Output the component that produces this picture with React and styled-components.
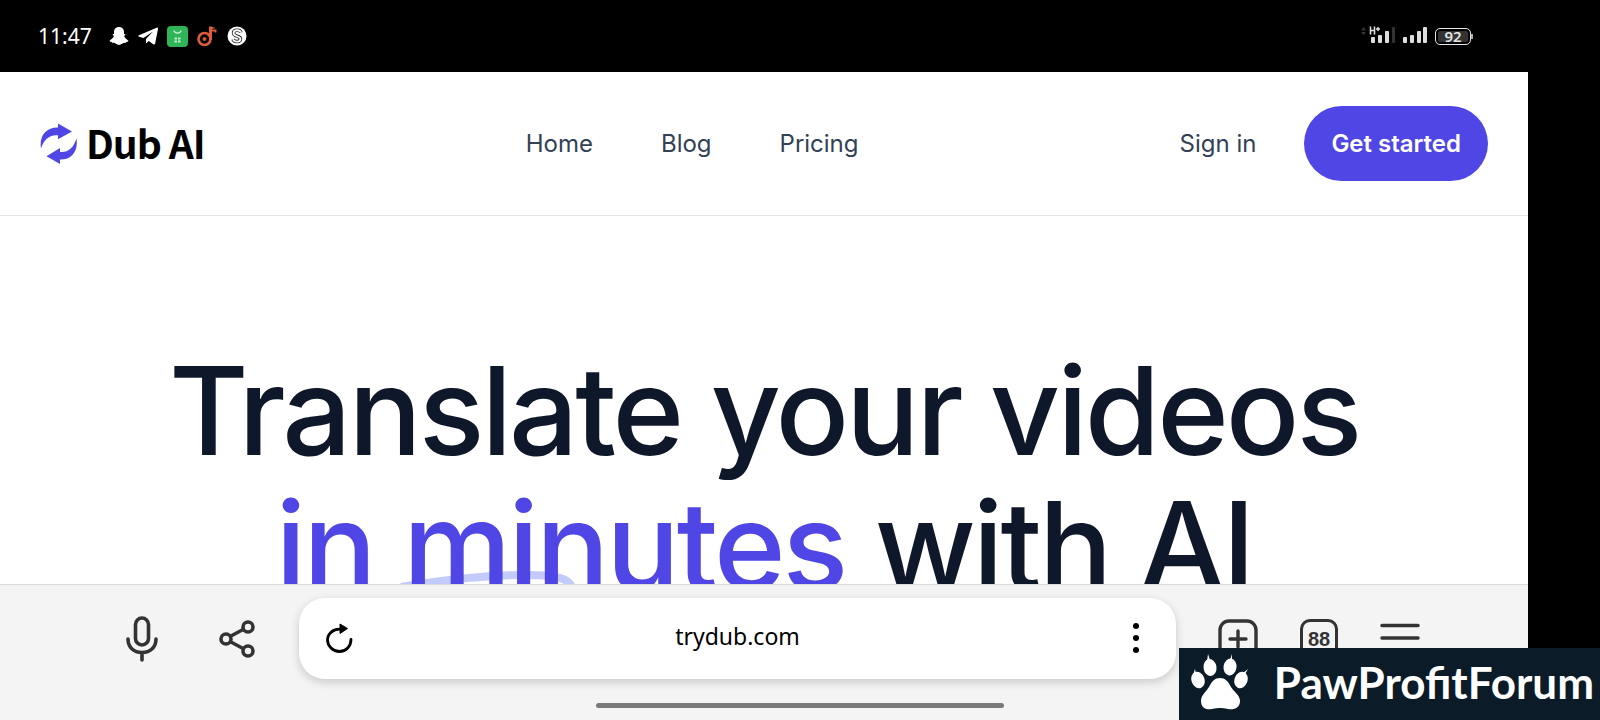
import React from "react";
import styled, { createGlobalStyle } from "styled-components";

const GlobalStyle = createGlobalStyle`
  * { box-sizing: border-box; }
  body { margin: 0; background: #000; font-family: Inter, "Liberation Sans", sans-serif; }
  button, a, input { font: inherit; color: inherit; }
  button { border: 0; padding: 0; background: none; cursor: pointer; }
  a { text-decoration: none; }
`;

const Screen = styled.div`
  display: flex;
  flex-direction: column;
  height: 100vh;
  background: #000;
`;

const StatusBar = styled.header`
  display: flex;
  flex: none;
  align-items: center;
  justify-content: space-between;
  height: 72px;
  padding: 0 129px 0 38px;
  color: #fff;
`;

const StatusGroup = styled.div`
  display: flex;
  align-items: center;
  gap: ${(p) => p.$gap}px;
`;

const Clock = styled.time`
  margin-right: 8px;
  font: 400 21px/28px "Noto Sans", sans-serif;
`;

const Browser = styled.div`
  display: flex;
  flex: 1;
  flex-direction: column;
  min-height: 0;
  margin-right: 72px;
  background: #fff;
`;

const Page = styled.main`
  flex: 1;
  min-height: 0;
  overflow: hidden;
`;

const SiteHeader = styled.div`
  display: flex;
  align-items: center;
  justify-content: space-between;
  height: 144px;
  padding: 0 40px;
  border-bottom: 1px solid #e2e4e8;
  color: #334155;
  font-size: 24px;
  line-height: 32px;
`;

const Brand = styled.a`
  display: flex;
  align-items: center;
  gap: 8px;
  color: #000;
`;

const Wordmark = styled.span`
  padding-bottom: 4px;
  font: 700 39px/48px "Noto Sans CJK SC", "Noto Sans", sans-serif;
  letter-spacing: -0.025em;
`;

const Nav = styled.nav`
  display: flex;
  gap: 68px;
`;

const Actions = styled.div`
  display: flex;
  align-items: center;
  gap: 48px;
`;

const Cta = styled.button`
  height: 75px;
  padding: 0 27px;
  border-radius: 38px;
  background: #4f46e5;
  color: #fff;
  font-weight: 600;
`;

const Headline = styled.h1`
  margin: 127px 0 0;
  color: #0f172a;
  font-size: 122px;
  font-weight: 500;
  line-height: 135px;
  letter-spacing: -0.025em;
  text-align: center;
  white-space: nowrap;
`;

const Accent = styled.span`
  position: relative;
  display: inline-block;
  color: #4f46e5;
`;

const Swoosh = styled.svg`
  position: absolute;
  left: 0;
  top: 88px;
`;

const AccentText = styled.span`
  position: relative;
`;

const Toolbar = styled.footer`
  flex: none;
  height: 136px;
  padding-top: 13px;
  border-top: 1px solid #dcdcdc;
  background: #f4f4f4;
  color: #333;
`;

const ToolRow = styled.div`
  display: flex;
  align-items: center;
  padding: 0 104px 0 118px;
`;

const ToolGroup = styled.div`
  display: flex;
  gap: ${(p) => p.$gap}px;
`;

const ToolButton = styled.button`
  display: flex;
  align-items: center;
  justify-content: center;
  width: 48px;
  height: 48px;
`;

const AddressBar = styled.div`
  display: flex;
  flex: 1;
  align-items: center;
  min-width: 0;
  height: 81px;
  margin: 0 38px;
  padding: 0 16px;
  border-radius: 26px;
  background: #fff;
  box-shadow: 0 3px 10px rgba(0, 0, 0, 0.18);
  color: #000;
`;

const AddressInput = styled.input`
  flex: 1;
  min-width: 0;
  height: 48px;
  padding: 0 0 6px;
  border: 0;
  outline: 0;
  background: none;
  font: 400 23px/32px "Noto Sans", sans-serif;
  text-align: center;
`;

const HomeIndicator = styled.div`
  width: 408px;
  height: 5px;
  margin: 24px 524px 0 auto;
  border-radius: 3px;
  background: #7a7a7a;
`;

const Watermark = styled.aside`
  position: fixed;
  right: 0;
  bottom: 0;
  display: flex;
  align-items: center;
  gap: 25px;
  height: 72px;
  padding: 0 6px 4px 12px;
  background: #0c1b28;
  color: #fff;
  font: 700 44px/56px Lato, sans-serif;
`;

const GhostIcon = () => (
  <svg width="20" height="20" viewBox="0 0 20 20" fill="#fff">
    <path d="M10 1C6.800 1 5 3.200 5 6v2c-1.500-.4-2 .8-.7 1.500.8.4.6 1-.2 2C3 13 1.500 14 .8 14.400c-.8.6.2 1.100 1.900 1.500l.4 1c1.500-.2 2.700-.1 3.800.9C9 19.300 11 19.300 13.100 17.800c1.100-1 2.300-1.100 3.800-.9l.4-1c1.700-.4 2.700-.9 1.900-1.500-.7-.4-2.200-1.400-3.300-2.900-.8-1-1-1.600-.2-2C17 8.800 16.500 7.600 15 8V6c0-2.800-1.800-5-5-5z" />
  </svg>
);

const PlaneIcon = () => (
  <svg width="20" height="20" viewBox="0 0 20 20" fill="#fff">
    <path d="M19.200 1.600 1 9.200c-1 .5-.9 1.200.1 1.500l4.400 1.400L15 5.600 8 13v4.600l2.700-2.700 4.600 3.300c1 .6 1.600.3 1.900-.9L20 3c.1-1.100-.1-1.500-.8-1.400z" />
  </svg>
);

const ShopIcon = () => (
  <svg width="21" height="21" viewBox="0 0 21 21" fill="none">
    <rect width="21" height="21" rx="4" fill="#2fb457" />
    <path d="M7 4.500c.6 3.500 6.400 3.500 7 0" stroke="#d8f5df" strokeWidth="1.300" />
    <path d="M7.500 11.500h2.500v2H7.500zM11 11.500h2.500v2H11zM7.500 14.500h2.500v2H7.500zM11 14.500h2.500v2H11z" fill="#c8f0d2" />
  </svg>
);

const NoteIcon = () => (
  <svg width="21" height="22" viewBox="0 0 21 22" fill="none" stroke="#dc5c3c">
    <circle cx="7.500" cy="14" r="6" strokeWidth="2.600" />
    <circle cx="7.500" cy="14" r="1.500" fill="#dc5c3c" strokeWidth="1" />
    <path d="M13.500 15V1.500" strokeWidth="3" />
    <path d="M13.500 3h4.500M15 5.500h4.500M18.500 4.500v4" strokeWidth="1.800" strokeDasharray="3 1" />
  </svg>
);

const CoinIcon = () => (
  <svg width="20" height="20" viewBox="0 0 20 20" fill="none">
    <circle cx="10" cy="10" r="9.500" fill="#fff" />
    <path d="M14 6.500C13 3.300 6.500 3.500 6.500 7c0 4 7 2.500 7 6 0 3.200-6.500 3.500-7.500.2" stroke="#222" strokeWidth="3.400" />
    <path d="M14 6.500C13 3.300 6.500 3.500 6.500 7c0 4 7 2.500 7 6 0 3.200-6.500 3.500-7.500.2" stroke="#fff" strokeWidth="1.800" />
  </svg>
);

const MobileSignalIcon = () => (
  <svg width="34" height="20" viewBox="0 0 34 20" fill="#ddd">
    <path d="M0 4.500 2.500 1 5 4.500zM0 6h5L2.500 9z" fill="#333" />
    <path d="M9.500 .5v8M13.500 .5v8M9.500 4.500h4M15 3h4M17 1v4" stroke="#ddd" strokeWidth="1.600" />
    <rect x="10" y="11" width="4" height="6" rx="1" />
    <rect x="17" y="9" width="4" height="8" rx="1" />
    <rect x="24" y="5" width="4" height="12" rx="1" />
    <rect x="31" y="1" width="3" height="16" rx="1" fill="#333" />
  </svg>
);

const SignalIcon = () => (
  <svg width="24" height="20" viewBox="0 0 24 20" fill="#ddd">
    <rect y="11" width="4" height="6" rx="1" />
    <rect x="7" y="9" width="4" height="8" rx="1" />
    <rect x="14" y="5" width="4" height="12" rx="1" />
    <rect x="20" y="1" width="4" height="16" rx="1" />
  </svg>
);

const Battery = styled.div`
  position: relative;
  width: 36px;
  height: 17px;
  border: 1px solid #e4e4e4;
  border-radius: 5px;
  background: #333;
  box-shadow: inset 0 0 0 2px #000;
  color: #e4e4e4;
  font: 600 15px/15px "Noto Sans", sans-serif;
  text-align: center;

  &::after {
    content: "";
    position: absolute;
    top: 5px;
    right: -3px;
    width: 2px;
    height: 5px;
    background: #aaa;
  }
`;

const LogoIcon = () => (
  <svg width="38" height="42" viewBox="0 0 38 42" fill="#4f46e5">
    <path d="M1 25.500C-1 13 6 4.200 18 4.500V.5L32 8.600 18 16.300v-4C10 11.500 4 16 1 25.500z" />
    <path d="M36.500 15.500c2 12.500-5 21.300-16.500 21v4.500L6.500 33.200 20 25v4c8 .8 13.500-4 16.500-13.500z" />
  </svg>
);

const MicIcon = () => (
  <svg width="32" height="46" viewBox="0 0 32 46" fill="none" stroke="currentColor" strokeWidth="3.600" strokeLinecap="round">
    <rect x="9.500" y="2" width="13" height="27" rx="6.500" />
    <path d="M2 23c0 8 5.500 13.500 14 13.500S30 31 30 23M16 37v7" />
  </svg>
);

const ShareIcon = () => (
  <svg width="38" height="40" viewBox="0 0 38 40" fill="none" stroke="currentColor" strokeWidth="3.600">
    <circle cx="8" cy="20" r="5" />
    <circle cx="30" cy="8" r="5" />
    <circle cx="30" cy="32" r="5" />
    <path d="m12 17.500 14-7.500M12 22.500l14 7.500" />
  </svg>
);

const ReloadIcon = () => (
  <svg width="28" height="32" viewBox="0 0 28 32" fill="none" stroke="currentColor" strokeWidth="2.800">
    <path d="M16 6.300C8 5.500 2.500 11 2.500 17S8 28.500 14.500 28.500 26 23 26 16.500" strokeLinecap="round" />
    <path d="M15 1v9.500l7.500-5z" fill="currentColor" strokeWidth="1" />
  </svg>
);

const DotsIcon = () => (
  <svg width="8" height="32" viewBox="0 0 8 32" fill="currentColor">
    <circle cx="4" cy="3" r="3" />
    <circle cx="4" cy="15" r="3" />
    <circle cx="4" cy="27" r="3" />
  </svg>
);

const PlusIcon = () => (
  <svg width="40" height="40" viewBox="0 0 40 40" fill="none" stroke="currentColor" strokeWidth="3.400" strokeLinecap="round">
    <rect x="2" y="2" width="36" height="36" rx="9" />
    <path d="M12 20h16M20 12v16" />
  </svg>
);

const MenuIcon = () => (
  <svg width="40" height="40" viewBox="0 0 40 40" stroke="currentColor" strokeWidth="3.500" strokeLinecap="round">
    <path d="M2 6.500h36M2 19h36M2 31.500h36" />
  </svg>
);

const TabCount = styled.span`
  width: 38px;
  height: 40px;
  border: 3px solid currentColor;
  border-radius: 10px;
  font: 700 20px/35px "Liberation Sans", sans-serif;
`;

const PawIcon = () => (
  <svg width="58" height="56" viewBox="0 0 58 56" fill="#fff">
    <path d="M29 24c5 0 8 3 11 9 3 5 9 8 9 14 0 7-6 9-12 8-5-1.500-11-1.500-16 0-6 1-11-1-11-8 0-6 5-9 8-14 3-6 6-9 11-9z" />
    <ellipse cx="7" cy="26" rx="6.500" ry="8.500" transform="rotate(-20 7 26)" />
    <ellipse cx="19" cy="13.500" rx="6.500" ry="8.500" transform="rotate(-8 19 13.500)" />
    <ellipse cx="39" cy="13" rx="6.500" ry="8.500" transform="rotate(8 39 13)" />
    <ellipse cx="50" cy="26" rx="6.500" ry="8.500" transform="rotate(20 50 26)" />
    <path d="m16 7 1-7 2 6zM39 6l2-6v6zM2 21l2-6 1 5zM52 19l5-4-4 7z" />
  </svg>
);

export default function App() {
  return (
    <Screen>
      <GlobalStyle />
      <StatusBar>
        <StatusGroup $gap={9}>
          <Clock>11:47</Clock>
          <GhostIcon />
          <PlaneIcon />
          <ShopIcon />
          <NoteIcon />
          <CoinIcon />
        </StatusGroup>
        <StatusGroup $gap={8}>
          <MobileSignalIcon />
          <SignalIcon />
          <Battery>92</Battery>
        </StatusGroup>
      </StatusBar>
      <Browser>
        <Page>
          <SiteHeader>
            <Brand href="#">
              <LogoIcon />
              <Wordmark>Dub AI</Wordmark>
            </Brand>
            <Nav>
              <a href="#home">Home</a>
              <a href="#blog">Blog</a>
              <a href="#pricing">Pricing</a>
            </Nav>
            <Actions>
              <a href="#signin">Sign in</a>
              <Cta type="button">Get started</Cta>
            </Actions>
          </SiteHeader>
          <Headline>
            Translate your videos
            <br />
            <Accent>
              <Swoosh width="320" height="60" viewBox="0 0 320 60" fill="none" aria-hidden="true">
                <path d="M126 21C174 13 217 9 252 9c30 0 46 3 46 18" stroke="#c3cbfa" strokeWidth="8" />
              </Swoosh>
              <AccentText>in minutes</AccentText>
            </Accent>{" "}
            with AI
          </Headline>
        </Page>
        <Toolbar>
          <ToolRow>
            <ToolGroup $gap={47}>
              <ToolButton type="button" aria-label="Voice search"><MicIcon /></ToolButton>
              <ToolButton type="button" aria-label="Share"><ShareIcon /></ToolButton>
            </ToolGroup>
            <AddressBar>
              <ToolButton type="button" aria-label="Reload"><ReloadIcon /></ToolButton>
              <AddressInput aria-label="Address" defaultValue="trydub.com" />
              <ToolButton type="button" aria-label="More options"><DotsIcon /></ToolButton>
            </AddressBar>
            <ToolGroup $gap={33}>
              <ToolButton type="button" aria-label="New tab"><PlusIcon /></ToolButton>
              <ToolButton type="button" aria-label="Open tabs"><TabCount>88</TabCount></ToolButton>
              <ToolButton type="button" aria-label="Menu"><MenuIcon /></ToolButton>
            </ToolGroup>
          </ToolRow>
          <HomeIndicator />
        </Toolbar>
      </Browser>
      <Watermark>
        <PawIcon />
        PawProfitForum
      </Watermark>
    </Screen>
  );
}
